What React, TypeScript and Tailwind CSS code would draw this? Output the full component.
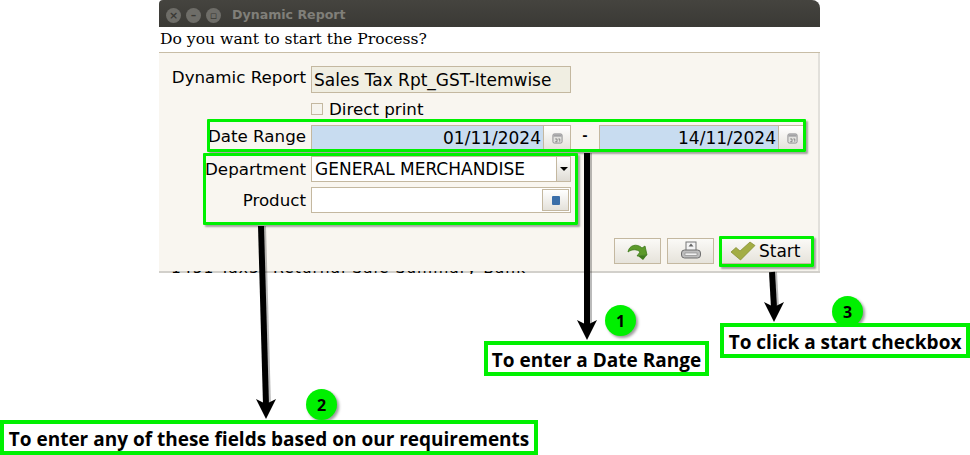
const labelFont = "[font-family:'DejaVu_Sans',sans-serif] text-[16.7px] text-black";
const fieldFont = "[font-family:'DejaVu_Sans',sans-serif] text-[17px] text-black";

const CalIcon = () => (
  <svg width="11" height="11" viewBox="0 0 12 12">
    <rect x="1" y="1" width="10" height="10" rx="1.5" fill="#e2e2df" stroke="#8a8a8c" />
    <rect x="1.5" y="1.5" width="9" height="2.5" fill="#a2a2a4" />
    <path d="M3.5 6.5h2v3h-2M7 6.5h1.5v3" fill="none" stroke="#777" strokeWidth="0.9" />
  </svg>
);

const SmallButton = ({ children }: { children: React.ReactNode }) => (
  <div className="w-[27px] h-full border-l border-[#c4b8a0] bg-gradient-to-b from-white to-[#e4e1da] flex items-center justify-center shrink-0">
    {children}
  </div>
);

const Label = ({ children, low }: { children: React.ReactNode; low?: boolean }) => (
  <div className={`w-[147px] text-right leading-[20px] shrink-0 ${low ? "pt-[3px]" : "pt-px"} ${labelFont}`}>{children}</div>
);

const ToolButton = ({ children }: { children: React.ReactNode }) => (
  <div className="w-[47px] h-[26px] border border-[#c4b8a0] bg-gradient-to-b from-[#fbfaf7] to-[#e6e3db] flex items-center justify-center">
    {children}
  </div>
);

const Arrow = ({ x1, y1, x2, y2 }: { x1: number; y1: number; x2: number; y2: number }) => (
  <g>
    <line x1={x1 + 2} y1={y1} x2={x2 + 2} y2={y2 - 14} stroke="#00000044" strokeWidth="6" />
    <line x1={x1} y1={y1} x2={x2} y2={y2 - 14} stroke="#000" strokeWidth="6" />
    <path d={`M${x2 - 10} ${y2 - 20} L${x2} ${y2 - 15} L${x2 + 10} ${y2 - 20} L${x2} ${y2} Z`} fill="#000" />
  </g>
);

const Badge = ({ n, className }: { n: string; className: string }) => (
  <div
    className={`absolute w-[31px] h-[31px] rounded-full bg-[#00f000] shadow-[2px_2px_3px_rgba(0,0,0,0.4)] flex items-center justify-center [font-family:'Open_Sans',sans-serif] font-bold text-[16px] text-black ${className}`}
  >
    {n}
  </div>
);

const Callout = ({ text, className }: { text: string; className: string }) => (
  <div
    className={`absolute h-[35px] border-[4px] border-[#00f000] bg-white pt-[3px] flex items-center justify-center whitespace-nowrap [font-family:'Open_Sans',sans-serif] font-bold text-[19px] text-black ${className}`}
  >
    {text}
  </div>
);

const GreenBox = ({ className }: { className: string }) => (
  <div className={`absolute border-[3px] border-[#00f000] shadow-[2px_2px_2px_rgba(0,0,0,0.35)] rounded-[1px] ${className}`} />
);

export default function App() {
  return (
    <div className="relative w-[970px] h-[455px] bg-white overflow-hidden">
      {/* Dialog */}
      <div className="ml-[159px] w-[661px]">
        <div className="h-[27px] bg-gradient-to-b from-[#45443f] to-[#3a3935] rounded-tr-[8px] rounded-tl-[4px] flex items-center pl-[7px] pt-[3px]">
          <div className="flex gap-[5px]">
            {["×", "–", "▫"].map((c) => (
              <div
                key={c}
                className="w-[15px] h-[15px] rounded-full bg-[#6e6d68] flex items-center justify-center text-[#3a3935] text-[11px] leading-none [font-family:'DejaVu_Sans',sans-serif] font-bold"
              >
                {c}
              </div>
            ))}
          </div>
          <span className="ml-[11px] [font-family:'DejaVu_Sans',sans-serif] font-bold text-[12.6px] text-[#807f79]">Dynamic Report</span>
        </div>
        <div className="h-[26px] bg-white border-b border-[#c8bda6] pl-px pt-[2px] [font-family:'DejaVu_Serif',serif] text-[15.6px] leading-[21px] text-black">
          Do you want to start the Process?
        </div>

        <div className="h-[218px] bg-[#f9f6f0] pt-[13px] border-r-[2px] border-[#e2e0db]">
          <div className="flex items-start gap-[5px]">
            <Label>Dynamic Report</Label>
            <div className={`w-[260px] h-[27px] border border-[#c4b8a0] bg-[#f0eee2] pl-[2px] leading-[26px] ${fieldFont}`}>
              Sales Tax Rpt_GST-Itemwise
            </div>
          </div>

          <div className="flex items-center mt-[6px] ml-[152px] h-[20px]">
            <div className="w-[12px] h-[12px] border border-[#c4b8a0] bg-[#f6f4ee]" />
            <span className={`ml-[6px] pt-px ${labelFont}`}>Direct print</span>
          </div>

          <div className="flex items-start gap-[5px] mt-[6px]">
            <Label>Date Range</Label>
            <div className="flex h-[26px]">
              <div className="w-[260px] h-[26px] border border-[#c4b8a0] flex">
                <div className={`flex-1 bg-[#c8dcf0] text-right pr-[2px] leading-[25px] ${fieldFont}`}>01/11/2024</div>
                <SmallButton><CalIcon /></SmallButton>
              </div>
              <div className="w-[28px] text-center leading-[22px] font-bold [font-family:'DejaVu_Sans',sans-serif] text-[13px] text-black">-</div>
              <div className="w-[207px] h-[26px] border border-[#c4b8a0] flex">
                <div className={`flex-1 bg-[#c8dcf0] text-right pr-[2px] leading-[25px] ${fieldFont}`}>14/11/2024</div>
                <SmallButton><CalIcon /></SmallButton>
              </div>
            </div>
          </div>

          <div className="flex items-start gap-[5px] mt-[5px]">
            <Label low>Department</Label>
            <div className="w-[260px] h-[26px] border border-[#c4b8a0] bg-white flex">
              <div className={`flex-1 pl-[3px] leading-[25px] ${fieldFont}`}>GENERAL MERCHANDISE</div>
              <div className="w-[14px] border-l border-[#c4b8a0] bg-gradient-to-b from-white to-[#dfdcd5] flex items-center justify-center">
                <div className="w-0 h-0 border-x-[4px] border-x-transparent border-t-[4px] border-t-black" />
              </div>
            </div>
          </div>

          <div className="flex items-start gap-[5px] mt-[5px]">
            <Label low>Product</Label>
            <div className="w-[260px] h-[26px] border border-[#c4b8a0] bg-white flex justify-end items-center pr-px">
              <div className="w-[27px] h-[22px] border border-[#c4b8a0] bg-gradient-to-b from-white to-[#e4e1da] flex items-center justify-center">
                <div className="w-[8px] h-[9px] rounded-[1px] bg-[#3a6ea8]" />
              </div>
            </div>
          </div>

          <div className="flex justify-end gap-[6px] mt-[25px] pr-[6px]">
            <ToolButton>
              <svg width="24" height="20" viewBox="0 0 24 20">
                <path d="M2 11 C3 4 11 2 16 7 L19 5 L21 14 L11 15 L14 11 C11 8 6 8 2 11 Z" fill="#5c9a2a" stroke="#3f7a1c" strokeWidth="0.8" />
                <path d="M12 15 L21 14 L17 19 Z" fill="#3f7a1c" />
              </svg>
            </ToolButton>
            <ToolButton>
              <svg width="24" height="22" viewBox="0 0 22 22">
                <rect x="6" y="2" width="10" height="9" fill="#f4f4f4" stroke="#777" />
                <path d="M11 3.5 L8.5 6.5H13.5Z" fill="#666" />
                <rect x="1.5" y="10" width="19" height="8" rx="3" fill="#bdbdbd" stroke="#6f6f6f" />
                <rect x="5" y="13" width="12" height="2.5" fill="#f2f2f2" stroke="#808080" strokeWidth="0.6" />
              </svg>
            </ToolButton>
            <div className="w-[92px] h-[26px] border border-[#c4b8a0] bg-gradient-to-b from-[#fbfaf7] to-[#e6e3db] flex items-center pl-[9px] gap-[3px]">
              <svg width="26" height="20" viewBox="0 0 26 20">
                <path d="M1 11 L6 6.5 L10 10 L20 1 L25 4.5 L10.5 19 Z" fill="#a3ad45" stroke="#7f8a2c" strokeWidth="0.7" />
              </svg>
              <span className={`${fieldFont} pt-px`}>Start</span>
            </div>
          </div>
        </div>
        <div className="h-[2px] bg-[#d2d0cb]" />
      </div>

      {/* text of the window behind, cut off by the dialog */}
      <div className="absolute left-[171px] top-[271px] h-[3px] w-[365px] overflow-hidden">
        <div className="-mt-[10px] whitespace-nowrap leading-[15px] tracking-[1px] [font-family:'DejaVu_Sans',sans-serif] text-[15.5px] text-black">1451 Tax3r Returnal Sale Summary Bank</div>
      </div>

      {/* Annotations */}
      <GreenBox className="left-[207px] top-[119px] w-[599px] h-[33px]" />
      <GreenBox className="left-[203px] top-[153px] w-[375px] h-[72px]" />
      <GreenBox className="left-[719px] top-[236px] w-[95px] h-[31px]" />

      <svg className="absolute inset-0 pointer-events-none" width="970" height="455">
        <Arrow x1={587} y1={153} x2={587} y2={340} />
        <Arrow x1={261} y1={226} x2={266} y2={419} />
        <Arrow x1={772} y1={272} x2={774} y2={322} />
      </svg>

      <Badge n="1" className="left-[605px] top-[305px]" />
      <Badge n="3" className="left-[832px] top-[296px]" />
      <Badge n="2" className="left-[306px] top-[389px]" />

      <Callout text="To enter a Date Range" className="left-[484px] top-[341px] w-[225px]" />
      <Callout text="To click a start checkbox" className="left-[720px] top-[323px] w-[250px]" />
      <Callout text="To enter any of these fields based on our requirements" className="left-0 top-[420px] w-[538px]" />
    </div>
  );
}
